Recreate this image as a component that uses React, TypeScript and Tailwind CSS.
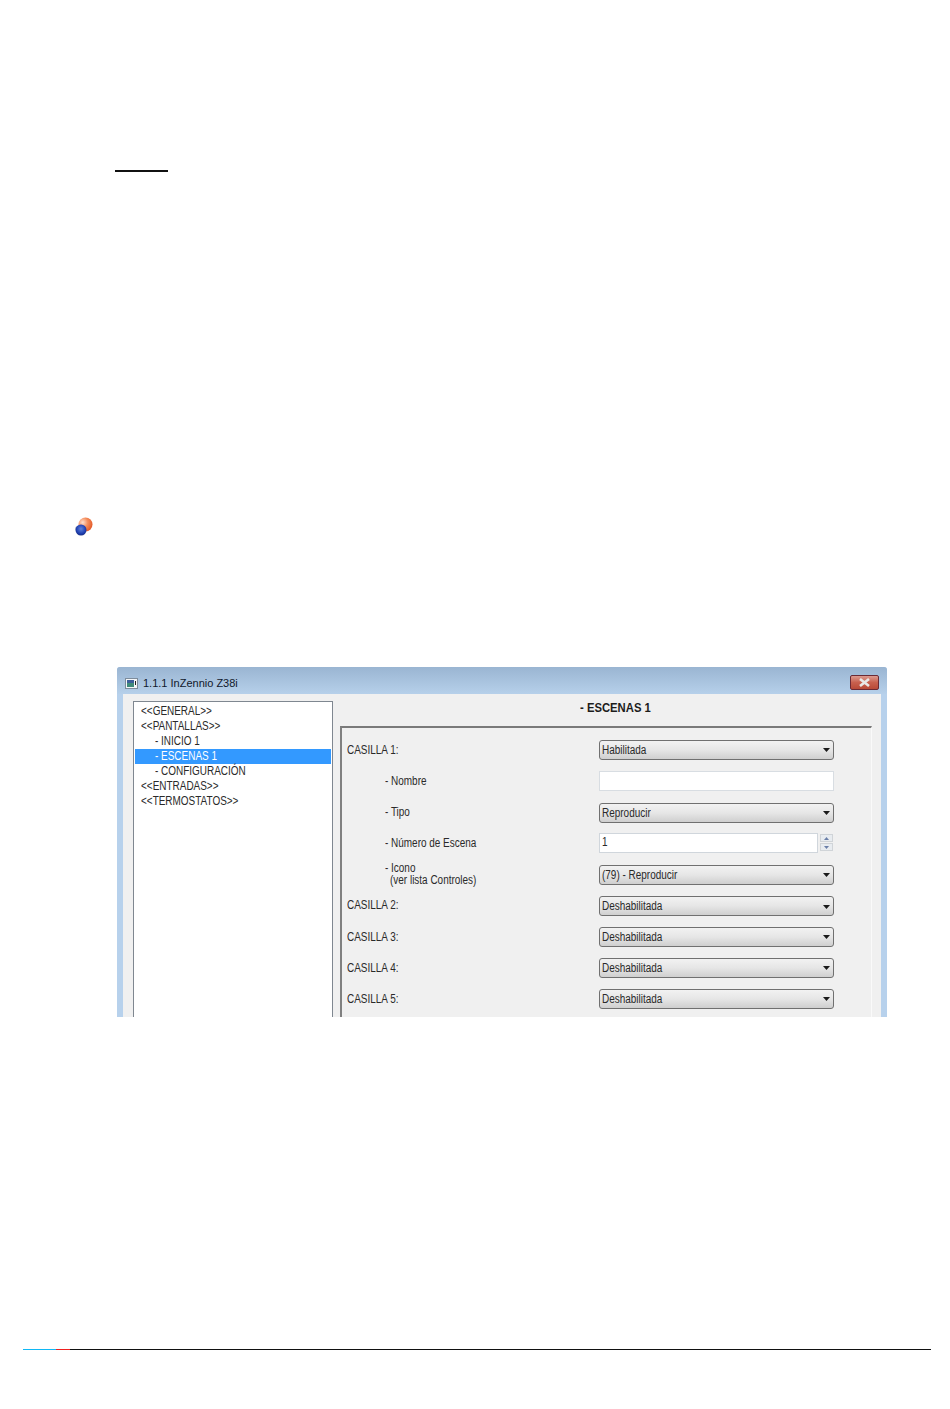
const font = { fontFamily: '"Liberation Sans", Arial, sans-serif' };

function T({ children }: { children: React.ReactNode }) {
  return <span className="inline-block origin-left scale-x-[0.83] whitespace-nowrap">{children}</span>;
}

function Arrow() {
  return (
    <svg width="7" height="4" viewBox="0 0 7 4" className="shrink-0">
      <path d="M0 0H7L3.5 4Z" fill="#1a1a1a" />
    </svg>
  );
}

function Select({ value, low }: { value: string; low?: boolean }) {
  return (
    <div className={`flex h-[20px] w-[235px] shrink-0 items-center justify-between rounded-[3px] border border-[#707070] bg-gradient-to-b from-[#f2f2f2] via-[#e6e6e6] to-[#cfcfcf] pl-[2px] pr-[3px] pt-[1px] ${low ? "mt-[2px]" : ""}`}>
      <T>{value}</T>
      <Arrow />
    </div>
  );
}

function Row({ label, sub, tall, children }: { label: string; sub?: string; tall?: boolean; children: React.ReactNode }) {
  return (
    <div className={`flex shrink-0 items-center ${tall ? "h-[32px]" : "h-[31px]"}`}>
      <div className={label.startsWith("-") ? "w-[252px] pl-[38px]" : "w-[252px]"}>
        <div className="leading-[12px]"><T>{label}</T></div>
        {sub && <div className="pl-[5px] leading-[12px]"><T>{sub}</T></div>}
      </div>
      {children}
    </div>
  );
}

function Spin() {
  return (
    <div className="flex w-[235px] items-center gap-[2px]">
      <div className="flex h-[20px] w-[219px] items-center border border-[#d0d6dc] bg-white pl-[2px]"><T>1</T></div>
      <div className="flex flex-col gap-[1px]">
        <div className="flex h-[8px] w-[13px] items-center justify-center border border-[#d0d4d8] bg-[#e8ecf0]">
          <svg width="5" height="3" viewBox="0 0 5 3"><path d="M0 3H5L2.5 0Z" fill="#6a7fa8" /></svg>
        </div>
        <div className="flex h-[8px] w-[13px] items-center justify-center border border-[#d0d4d8] bg-[#e8ecf0]">
          <svg width="5" height="3" viewBox="0 0 5 3"><path d="M0 0H5L2.5 3Z" fill="#6a7fa8" /></svg>
        </div>
      </div>
    </div>
  );
}

const tree = [
  { t: "<<GENERAL>>", i: 0 },
  { t: "<<PANTALLAS>>", i: 0 },
  { t: "- INICIO 1", i: 1 },
  { t: "- ESCENAS 1", i: 1, sel: true },
  { t: "- CONFIGURACIÓN", i: 1 },
  { t: "<<ENTRADAS>>", i: 0 },
  { t: "<<TERMOSTATOS>>", i: 0 },
];

export default function App() {
  return (
    <div className="flex h-[1409px] w-[950px] flex-col overflow-hidden bg-white" style={font}>
      <div className="ml-[115px] mt-[170px] h-[2px] w-[53px] bg-[#111]" />

      <svg className="ml-[75px] mt-[345px]" width="18" height="19" viewBox="0 0 18 19">
        <defs>
          <radialGradient id="o" cx="0.3" cy="0.35" r="0.8">
            <stop offset="0" stopColor="#fde0d0" />
            <stop offset="0.45" stopColor="#f58f5e" />
            <stop offset="1" stopColor="#e0501f" />
          </radialGradient>
          <radialGradient id="b" cx="0.5" cy="0.4" r="0.7">
            <stop offset="0" stopColor="#5f82dc" />
            <stop offset="0.6" stopColor="#1f3fb0" />
            <stop offset="1" stopColor="#12236e" />
          </radialGradient>
        </defs>
        <circle cx="10.5" cy="7.5" r="7" fill="url(#o)" />
        <circle cx="2.8" cy="11.5" r="2.6" fill="#b8bcc4" />
        <circle cx="6" cy="13" r="5.5" fill="url(#b)" />
      </svg>

      <div className="ml-[117px] mt-[131px] flex h-[350px] w-[770px] flex-col overflow-hidden rounded-t-[3px] bg-[#b7d1ec] text-[12px] leading-[15px] text-[#2a2a2a]">
        <div className="flex h-[27px] shrink-0 items-end justify-between bg-gradient-to-b from-[#9ab5d2] to-[#b6d0ea] px-[8px] pb-[4px]">
          <div className="flex items-center gap-[5px]">
            <svg width="13" height="11" viewBox="0 0 13 11">
              <rect x="0.5" y="0.5" width="12" height="10" fill="#f4f6f8" stroke="#7d8c9c" />
              <rect x="2" y="2" width="7" height="7" fill="#3f8a7a" />
              <rect x="2" y="2" width="7" height="3" fill="#3c5f9a" />
              <rect x="10" y="3" width="1" height="4" fill="#222" />
            </svg>
            <span className="text-[11px] leading-[13px] text-[#10182c]">1.1.1 InZennio Z38i</span>
          </div>
          <div className="flex h-[15px] w-[29px] items-center justify-center rounded-[2px] border border-[#6b2a35] bg-gradient-to-b from-[#dc9a90] via-[#c8604e] to-[#b84a38]">
            <svg width="13" height="9" viewBox="0 0 13 9">
              <path d="M2 1L11 8M11 1L2 8" stroke="#e8e8e8" strokeWidth="2.6" />
            </svg>
          </div>
        </div>

        <div className="mx-[6px] flex min-h-0 flex-1 bg-[#f0f0f0] pl-[10px] pt-[7px]">
          <div className="h-[400px] w-[200px] shrink-0 border border-[#7f8790] bg-white px-[1px] pt-[2px]">
            {tree.map((r) => (
              <div
                key={r.t}
                className={`h-[15px] ${r.i ? "pl-[20px]" : "pl-[6px]"} ${r.sel ? "bg-[#3399ff] text-white" : ""}`}
              >
                <T>{r.t}</T>
              </div>
            ))}
          </div>

          <div className="ml-[7px] flex w-[532px] shrink-0 flex-col">
            <div className="h-[25px] shrink-0 pl-[240px]">
              <span className="inline-block origin-left scale-x-[0.94] whitespace-nowrap text-[12px] font-bold leading-[15px] text-[#1c1c1c]">- ESCENAS 1</span>
            </div>
            <div className="h-[400px] shrink-0 border-l-2 border-r border-t-2 border-l-[#808080] border-r-[#fafafa] border-t-[#7a7a7a] pl-[5px] pt-[6px]">
              <Row label="CASILLA 1:"><Select value="Habilitada" /></Row>
              <Row label="- Nombre">
                <div className="h-[20px] w-[235px] border border-[#d8dde2] bg-white" />
              </Row>
              <Row label="- Tipo"><Select value="Reproducir" low /></Row>
              <Row label="- Número de Escena"><Spin /></Row>
              <Row label="- Icono" sub="(ver lista Controles)"><Select value="(79) - Reproducir" low /></Row>
              <Row label="CASILLA 2:" tall><Select value="Deshabilitada" low /></Row>
              <Row label="CASILLA 3:"><Select value="Deshabilitada" /></Row>
              <Row label="CASILLA 4:"><Select value="Deshabilitada" /></Row>
              <Row label="CASILLA 5:"><Select value="Deshabilitada" /></Row>
            </div>
          </div>
        </div>
      </div>

      <div className="ml-[23px] mt-[332px] flex h-[1px] w-[908px]">
        <div className="w-[33px] bg-[#10b8f5]" />
        <div className="w-[14px] bg-[#ee2020]" />
        <div className="flex-1 bg-[#111]" />
      </div>
    </div>
  );
}
